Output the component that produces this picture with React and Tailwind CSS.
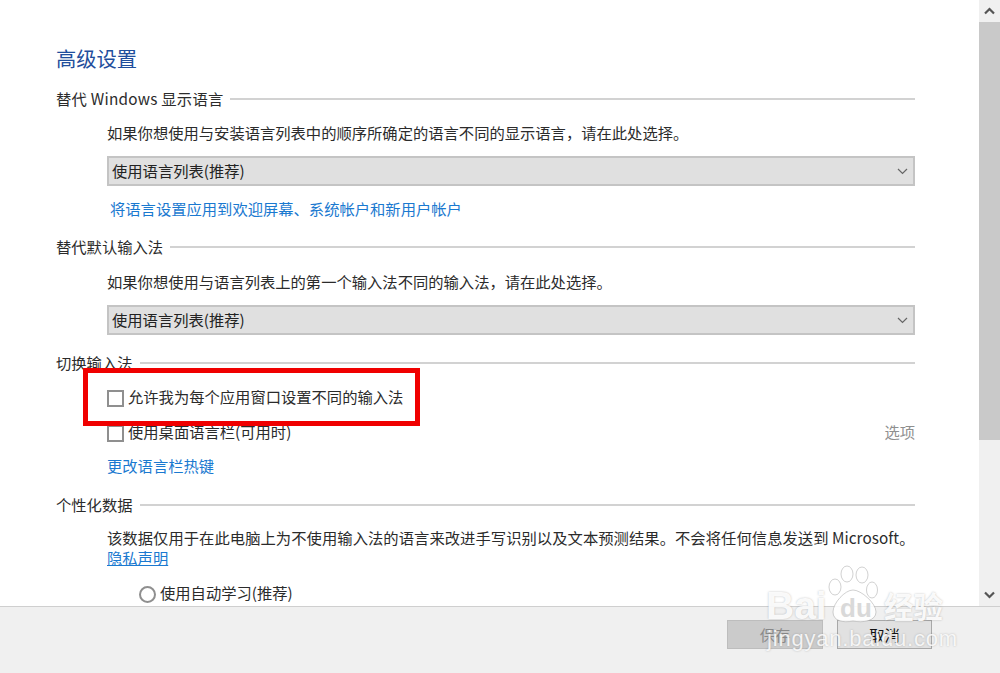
import React from 'react';

const font = { fontFamily: '"Noto Sans CJK SC", sans-serif' };

function SectionHeader({ title, className = '', textClass = '' }) {
    return (
        <div className={`flex items-center gap-[7px] h-[22px] ${className}`}>
            <span className={`text-[15.3px] leading-[22px] text-[#2b2b2b] whitespace-nowrap -translate-y-px ${textClass}`}>{title}</span>
            <div className="flex-1 h-[2px] bg-[#d2d2d2]"></div>
        </div>
    );
}

function Select({ className = '' }) {
    return (
        <div className={`ml-[51px] h-[30px] bg-[#e0e0e0] border-2 border-[#c4c4c4] flex items-center justify-between pl-[3px] pr-[5px] ${className}`}>
            <span className="text-[15.3px] text-[#222] -translate-y-px">使用语言列表(推荐)</span>
            <svg width="11" height="7" viewBox="0 0 11 7" fill="none" stroke="#666" strokeWidth="1.2">
                <path d="M1 1 L5.5 5.5 L10 1" />
            </svg>
        </div>
    );
}

function Checkbox({ label, className = '' }) {
    return (
        <div className={`flex items-center gap-[4px] ml-[51px] h-[22px] ${className}`}>
            <div className="w-[17px] h-[17px] border-2 border-[#8f8f8f] bg-white shrink-0 translate-y-px"></div>
            <span className="text-[15.3px] leading-[22px] text-[#2b2b2b] whitespace-nowrap -translate-y-px">{label}</span>
        </div>
    );
}

function Scrollbar() {
    return (
        <div className="w-[21px] bg-[#f0f0f0] flex flex-col shrink-0">
            <div className="h-[22px] flex items-center justify-center">
                <svg width="11" height="8" viewBox="0 0 11 8" fill="none" stroke="#555" strokeWidth="2.2">
                    <path d="M1 6.5 L5.5 2 L10 6.5" />
                </svg>
            </div>
            <div className="h-[418px] bg-[#c9c9c9]"></div>
            <div className="flex-1"></div>
            <div className="h-[22px] flex items-center justify-center">
                <svg width="11" height="8" viewBox="0 0 11 8" fill="none" stroke="#555" strokeWidth="2.2">
                    <path d="M1 1.5 L5.5 6 L10 1.5" />
                </svg>
            </div>
        </div>
    );
}

// baidu watermark sits over the page, white with a faint grey edge
function Watermark() {
    const edge = '[text-shadow:0_0_2px_rgba(90,90,90,0.4)]';
    return (
        <div className="absolute left-[766px] top-[564px] w-[234px] h-[100px] pointer-events-none">
            <svg className="absolute left-[62px] top-[1px]" width="50" height="60" viewBox="0 0 50 60" fill="#ffffff" fillOpacity="0.88" stroke="#8c8c8c" strokeOpacity="0.4" strokeWidth="1">
                <ellipse cx="7" cy="22" rx="6" ry="8" />
                <ellipse cx="19" cy="9" rx="6" ry="8" />
                <ellipse cx="34" cy="10" rx="6" ry="8" />
                <ellipse cx="44" cy="25" rx="5.5" ry="8" />
                <path d="M25 25 C17 25 5 38 5 47 C5 56 15 58 25 56 C35 58 48 56 48 47 C48 38 33 25 25 25 Z" />
            </svg>
            <span className={`absolute left-0 top-[20px] text-[39px] leading-[44px] font-bold text-white/90 ${edge}`} style={{ fontFamily: '"Liberation Sans", sans-serif' }}>Bai</span>
            <span className="absolute left-[74px] top-[29px] text-[26px] leading-[30px] font-bold text-[#d9d9d9]" style={{ fontFamily: '"Liberation Sans", sans-serif' }}>du</span>
            <span className={`absolute left-[118px] top-[20px] text-[29.5px] leading-[42px] font-bold text-white/90 ${edge}`}>经验</span>
            <span className={`absolute left-[1px] top-[62px] text-[22px] leading-[26px] tracking-[0.8px] text-white/85 ${edge}`} style={{ fontFamily: '"Liberation Sans", sans-serif' }}>jingyan.baidu.com</span>
        </div>
    );
}

export default function App() {
    return (
        <div className="relative w-[1000px] h-[673px] bg-white overflow-hidden" style={font}>
            <div className="flex h-[606px]">
                <div className="flex-1 overflow-hidden pl-[56px] pr-[64px]">
                    <h1 className="text-[20.3px] leading-[30px] text-[#1f4e9c] mt-[43px]">高级设置</h1>

                    <SectionHeader title="替代 Windows 显示语言" textClass="tracking-[0.25px]" className="mt-[15px]" />
                    <p className="ml-[51px] mt-[11px] text-[15.3px] leading-[22px] text-[#2b2b2b] whitespace-nowrap">如果你想使用与安装语言列表中的顺序所确定的语言不同的显示语言，请在此处选择。</p>
                    <Select className="mt-[13px]" />
                    <a className="block ml-[54px] mt-[11px] text-[15.3px] leading-[22px] text-[#1a79d0] whitespace-nowrap">将语言设置应用到欢迎屏幕、系统帐户和新用户帐户</a>

                    <SectionHeader title="替代默认输入法" className="mt-[17px]" />
                    <p className="ml-[51px] mt-[12px] text-[15.3px] leading-[22px] text-[#2b2b2b] whitespace-nowrap">如果你想使用与语言列表上的第一个输入法不同的输入法，请在此处选择。</p>
                    <Select className="mt-[13px]" />

                    <SectionHeader title="切换输入法" className="mt-[17px]" />
                    <Checkbox label="允许我为每个应用窗口设置不同的输入法" className="mt-[12px]" />
                    <div className="flex items-center justify-between mt-[13px]">
                        <Checkbox label="使用桌面语言栏(可用时)" />
                        <span className="text-[15.3px] leading-[22px] text-[#8f8f8f] -translate-y-px">选项</span>
                    </div>
                    <a className="block ml-[51px] mt-[11px] text-[15.3px] leading-[22px] text-[#1a79d0]">更改语言栏热键</a>

                    <SectionHeader title="个性化数据" className="mt-[18px]" />
                    <p className="ml-[51px] mt-[10px] text-[15.3px] leading-[22px] tracking-[0.055px] text-[#2b2b2b] whitespace-nowrap">该数据仅用于在此电脑上为不使用输入法的语言来改进手写识别以及文本预测结果。不会将任何信息发送到 Microsoft。</p>
                    <a className="block ml-[51px] mt-[-2px] text-[15.3px] leading-[22px] text-[#1a79d0] underline">隐私声明</a>
                    <div className="flex items-center gap-[4px] ml-[83px] mt-[14px] h-[22px]">
                        <div className="w-[17px] h-[17px] rounded-full border-2 border-[#8f8f8f] bg-white shrink-0 translate-y-px"></div>
                        <span className="text-[15.3px] leading-[22px] text-[#2b2b2b] whitespace-nowrap -translate-y-px">使用自动学习(推荐)</span>
                    </div>
                </div>
                <Scrollbar />
            </div>

            <div className="h-[67px] bg-[#f0f0f0] border-t border-[#cfcfcf] flex justify-end gap-[14px] pt-[13px] pr-[68px]">
                <button className="w-[96px] h-[29px] bg-[#cbcbcb] border border-[#bdbdbd] text-[15.3px] text-[#8a8a8a]">保存</button>
                <button className="w-[95px] h-[29px] bg-[#e1e1e1] border border-[#a8a8a8] text-[15.3px] text-[#111]">取消</button>
            </div>

            <div className="absolute left-[83px] top-[368px] w-[337px] h-[58px] border-[5px] border-[#f00000]"></div>
            <Watermark />
        </div>
    );
}
